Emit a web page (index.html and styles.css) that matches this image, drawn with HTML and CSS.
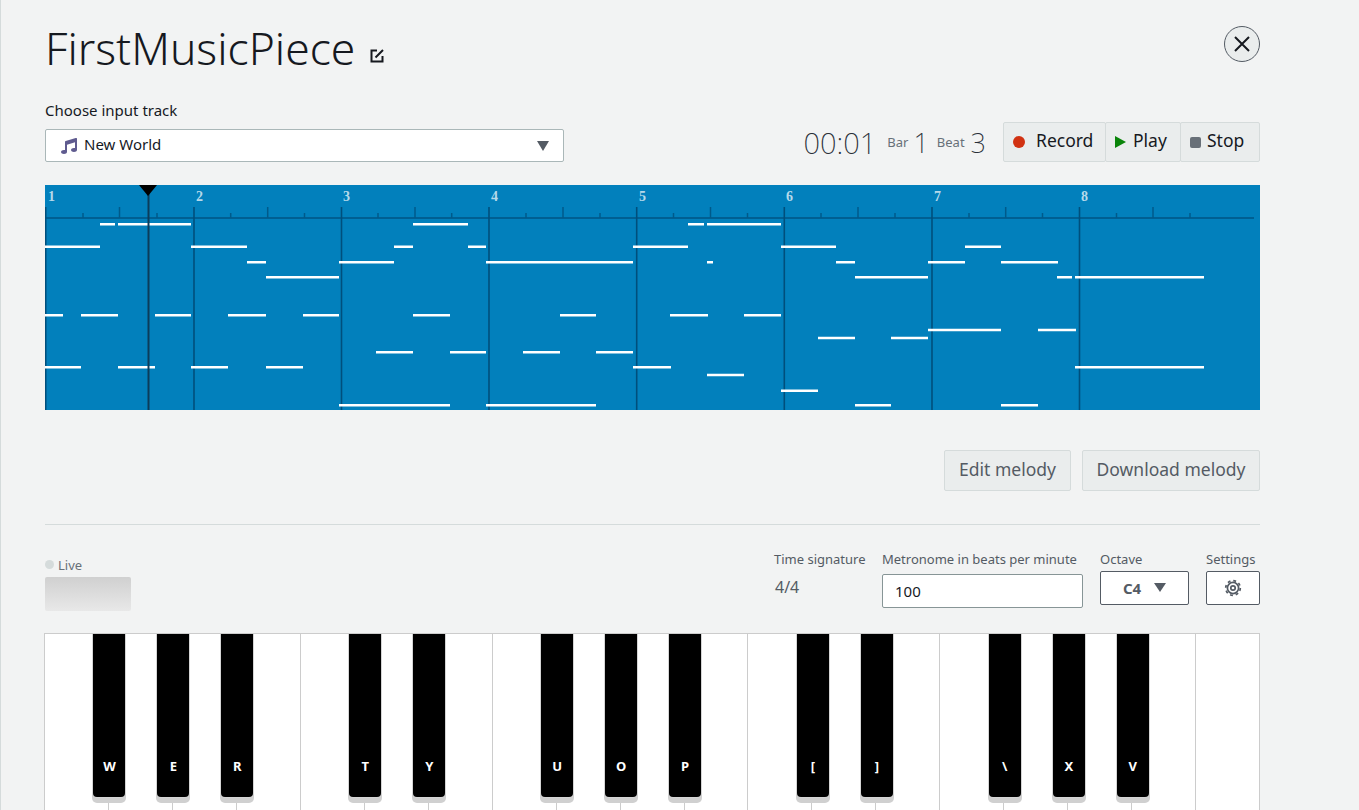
FILE: index.html
```html
<!DOCTYPE html>
<html>
<head>
  <meta charset="utf-8">
  <title>FirstMusicPiece</title>
  <link rel="stylesheet" href="styles.css">
</head>
<body>
  <div class="page">
    <div class="title-row">
      <div class="title">
        <h1>FirstMusicPiece</h1>
        <svg class="edit-icon" viewBox="0 0 16 16"><path d="M8 2.5H2.5v11h11V8M6.5 9.5L14 2"/></svg>
      </div>
      <button class="close-btn" type="button">
        <svg viewBox="0 0 16 16"><path d="M1 1l14 14M15 1L1 15"/></svg>
      </button>
    </div>

    <div class="track-row">
      <div class="track-picker">
        <label class="track-label">Choose input track</label>
        <div class="track-select">
          <svg class="note-icon" viewBox="0 0 512 512"><path d="M470.38 1.51L150.41 96A32 32 0 0 0 128 126.51v261.41A139 139 0 0 0 96 384c-53 0-96 28.66-96 64s43 64 96 64 96-28.66 96-64V214.32l256-75v184.61a138.4 138.4 0 0 0-32-3.93c-53 0-96 28.66-96 64s43 64 96 64 96-28.65 96-64V32a32 32 0 0 0-41.62-30.49z"/></svg>
          <span>New World</span>
          <i class="caret"></i>
        </div>
      </div>
      <div class="transport">
        <span class="time">00:01</span>
        <span class="count-label count-bar">Bar</span>
        <span class="count count-first">1</span>
        <span class="count-label count-beat">Beat</span>
        <span class="count">3</span>
        <div class="transport-btns">
          <button class="t-btn t-record" type="button"><i class="dot"></i>Record</button>
          <button class="t-btn t-play" type="button"><i class="play"></i>Play</button>
          <button class="t-btn t-stop" type="button"><i class="stop"></i>Stop</button>
        </div>
      </div>
    </div>

    <svg class="roll" viewBox="45 185 1215 225">
      <g class="bar-nums">
        <text x="48" y="201">1</text><text x="196" y="201">2</text><text x="343" y="201">3</text><text x="491" y="201">4</text>
        <text x="639" y="201">5</text><text x="786" y="201">6</text><text x="934" y="201">7</text><text x="1081" y="201">8</text>
      </g>
      <path class="ruler" d="M45 218H1254"/>
      <path class="tick-s" d="M83 213v5M157 213v5M230.7 213v5M304.5 213v5M378 213v5M451.7 213v5M526 213v5M600 213v5M673.5 213v5M747.5 213v5M821 213v5M895 213v5M969 213v5M1042.5 213v5M1116.5 213v5M1190 213v5"/>
      <path class="tick-m" d="M119.5 207v11M267.7 207v11M415 207v11M563 207v11M710.5 207v11M858 207v11M1005.7 207v11M1153 207v11"/>
      <path class="bar-line" d="M45.7 207V410M194 207V410M341.5 207V410M489 207V410M636.7 207V410M784.3 207V410M932 207V410M1079.5 207V410"/>
      <g class="notes">
        <path d="M100 224.3h15M118 224.3h73M413 224.3h55M688 224.3h16M707 224.3h74"/>
        <path d="M45 246.7h55M191 246.7h56M394 246.7h19M468 246.7h18M633 246.7h55M781 246.7h55M965 246.7h36"/>
        <path d="M247 262.3h19M339 262.3h55M486 262.3h147M707 262.3h6M836 262.3h19M928 262.3h37M1001 262.3h57"/>
        <path d="M266 277.3h73M855 277.3h73M1057 277.3h15M1075 277.3h129"/>
        <path d="M45 315.3h18M81 315.3h37M155 315.3h36M228 315.3h38M303 315.3h36M413 315.3h37M560 315.3h36M670 315.3h38M744 315.3h37"/>
        <path d="M928 330h73M1038 330h38"/>
        <path d="M818 338h37M891 338h37"/>
        <path d="M376 352.3h37M450 352.3h36M523 352.3h37M596 352.3h37"/>
        <path d="M45 367.3h36M118 367.3h37M191 367.3h37M266 367.3h37M633 367.3h38M1075 367.3h129"/>
        <path d="M707 375h37"/>
        <path d="M781 390.7h37"/>
        <path d="M339 405.3h111M486 405.3h110M855 405.3h36M1001 405.3h37"/>
      </g>
      <path class="playhead" d="M148.5 190V410"/>
      <path d="M139 185h18l-9 11z"/>
    </svg>

    <div class="melody-actions">
      <button class="m-btn m-edit" type="button">Edit melody</button>
      <button class="m-btn m-download" type="button">Download melody</button>
    </div>

    <div class="divider"></div>

    <div class="controls">
      <div class="live">
        <div class="live-label"><i></i>Live</div>
        <div class="live-box"></div>
      </div>
      <div class="fields">
        <div class="field f-time">
          <div class="field-label">Time signature</div>
          <div class="time-sig">4/4</div>
        </div>
        <div class="field f-metro">
          <div class="field-label">Metronome in beats per minute</div>
          <div class="metro-input">100</div>
        </div>
        <div class="field f-octave">
          <div class="field-label">Octave</div>
          <button class="octave-btn" type="button">C4<i class="caret"></i></button>
        </div>
        <div class="field f-settings">
          <div class="field-label">Settings</div>
          <button class="octave-btn" type="button">
            <svg class="gear" viewBox="0 0 18 18">
              <circle class="gear-teeth" cx="9" cy="9" r="7.3"/>
              <circle cx="9" cy="9" r="5.6"/>
              <circle cx="9" cy="9" r="2.2"/>
            </svg>
          </button>
        </div>
      </div>
    </div>

    <div class="piano">
      <div class="white"><span class="black">W</span></div>
      <div class="white"><span class="black">E</span></div>
      <div class="white"><span class="black">R</span></div>
      <div class="white"></div>
      <div class="white"><span class="black">T</span></div>
      <div class="white"><span class="black">Y</span></div>
      <div class="white"></div>
      <div class="white"><span class="black">U</span></div>
      <div class="white"><span class="black">O</span></div>
      <div class="white"><span class="black">P</span></div>
      <div class="white"></div>
      <div class="white"><span class="black">[</span></div>
      <div class="white"><span class="black">]</span></div>
      <div class="white"></div>
      <div class="white"><span class="black">\</span></div>
      <div class="white"><span class="black">X</span></div>
      <div class="white"><span class="black">V</span></div>
      <div class="white"></div>
      <div class="white"></div>
    </div>
  </div>
</body>
</html>
```

FILE: styles.css
```css
html, body {
  margin: 0;
  padding: 0;
}

body {
  background: #f2f3f3;
  color: #16191f;
  font-family: "Noto Sans", Arial, sans-serif;
}

button {
  font-family: inherit;
  cursor: pointer;
}

i {
  display: block;
}

.page {
  box-sizing: border-box;
  height: 100vh;
  overflow: hidden;
  border-left: 1px solid #d5dbdb;
  padding-left: 44px;
}

.page > * {
  width: 1215px;
}

/* header */
.title-row {
  display: flex;
  justify-content: space-between;
  align-items: flex-start;
  box-sizing: border-box;
  height: 101px;
  padding-top: 26px;
}

.title {
  display: flex;
  align-items: flex-end;
}

h1 {
  margin: 0;
  font-size: 44.4px;
  font-weight: 300;
  line-height: 44px;
}

.edit-icon {
  width: 16px;
  height: 16px;
  margin: 0 0 6px 14px;
  fill: none;
  stroke: #16191f;
  stroke-width: 2;
}

.close-btn {
  box-sizing: border-box;
  width: 36px;
  height: 36px;
  padding: 0;
  border: 1px solid #545b64;
  border-radius: 50%;
  background: #eaeded;
  display: flex;
  align-items: center;
  justify-content: center;
}

.close-btn svg {
  width: 16px;
  height: 16px;
  fill: none;
  stroke: #16191f;
  stroke-width: 2;
}

/* track row */
.track-row {
  display: flex;
  justify-content: space-between;
  align-items: flex-end;
  height: 61px;
}

.track-label {
  display: block;
  height: 28px;
  font-size: 15px;
  line-height: 18px;
}

.track-select {
  box-sizing: border-box;
  width: 519px;
  height: 33px;
  display: flex;
  align-items: center;
  padding: 0 14px 0 15px;
  background: #fff;
  border: 1px solid #aab7b8;
  border-radius: 2px;
  font-size: 15px;
}

.track-select span {
  margin-bottom: 3px;
}

.note-icon {
  width: 16px;
  height: 16px;
  margin-right: 7px;
  fill: #5f5b8f;
}

.caret {
  width: 0;
  height: 0;
  margin-left: auto;
  border-style: solid;
  border-width: 10px 6.5px 0;
  border-color: #545b64 transparent transparent;
}

.transport {
  display: flex;
  align-items: center;
  color: #2a2f38;
}

.time {
  font-size: 29px;
  font-weight: 200;
  margin-right: 11px;
}

.count-label {
  font-size: 13px;
  color: #687078;
}

.count-bar {
  margin-right: 5px;
}

.count-beat {
  margin-right: 6px;
}

.count {
  font-size: 27px;
  font-weight: 200;
  margin-right: 12px;
}

.count-first {
  margin-right: 8px;
}

.transport-btns {
  display: flex;
  height: 40px;
  margin-left: 6px;
}

.t-btn {
  box-sizing: border-box;
  display: flex;
  align-items: center;
  padding: 0 0 4px 9px;
  margin-left: -1px;
  background: #eaeded;
  border: 1px solid #d5dbdb;
  border-radius: 2px;
  color: #16191f;
  font-size: 17.5px;
}

.t-record {
  width: 103px;
}

.t-play {
  width: 76px;
}

.t-stop {
  width: 80px;
}

.dot {
  width: 12px;
  height: 12px;
  margin: 4px 11px 0 0;
  border-radius: 50%;
  background: #d13212;
}

.play {
  width: 0;
  height: 0;
  margin: 4px 7px 0 0;
  border-style: solid;
  border-width: 6px 0 6px 11px;
  border-color: transparent transparent transparent #0a850a;
}

.stop {
  width: 11px;
  height: 11px;
  margin: 4px 6px 0 0;
  border-radius: 2px;
  background: #687078;
}

/* melody roll */
.roll {
  display: block;
  height: 225px;
  margin-top: 23px;
  background: #0280bc;
}

.bar-nums text {
  fill: #b5d9ea;
  font-family: "Liberation Serif", serif;
  font-size: 14px;
  font-weight: 700;
}

.ruler {
  fill: none;
  stroke: #005f92;
  stroke-width: 2;
}

.tick-s,
.tick-m {
  fill: none;
  stroke: #005a8a;
  stroke-width: 1.5;
}

.bar-line {
  fill: none;
  stroke: #004f7c;
  stroke-width: 1.6;
}

.notes path {
  fill: none;
  stroke: #fff;
  stroke-width: 2.6;
}

.playhead {
  fill: none;
  stroke: #0c3c5a;
  stroke-width: 2;
}

.melody-actions {
  display: flex;
  justify-content: flex-end;
  gap: 11px;
  margin-top: 40px;
}

.m-btn {
  box-sizing: border-box;
  height: 41px;
  padding: 0 0 4px;
  background: #eaeded;
  border: 1px solid #d5dbdb;
  border-radius: 2px;
  color: #545b64;
  font-size: 17.5px;
}

.m-edit {
  width: 127px;
}

.m-download {
  width: 178px;
}

.divider {
  height: 1px;
  margin-top: 33px;
  background: #d5dbdb;
}

/* controls */
.controls {
  display: flex;
  justify-content: space-between;
  height: 59px;
  margin-top: 27px;
  color: #545b64;
}

.live-label {
  display: flex;
  align-items: center;
  height: 25px;
  font-size: 13px;
  color: #687078;
}

.live-label i {
  width: 9px;
  height: 9px;
  margin-right: 4px;
  border-radius: 50%;
  background: #d5dbdb;
}

.live-box {
  width: 86px;
  height: 34px;
  border-radius: 2px;
  background: linear-gradient(#d0d0d0, #e8e8e8);
}

.fields {
  display: flex;
}

.field-label {
  height: 19px;
  font-size: 13px;
  line-height: 15px;
  white-space: nowrap;
}

.f-time {
  width: 92px;
  margin-right: 16px;
}

.time-sig {
  margin-top: 5px;
  padding-left: 1px;
  font-size: 16px;
}

.f-metro {
  width: 201px;
  margin-right: 17px;
}

.metro-input {
  box-sizing: border-box;
  height: 34px;
  margin-top: 3px;
  padding: 6px 12px;
  background: #fff;
  border: 1px solid #879596;
  border-radius: 2px;
  color: #16191f;
  font-size: 15px;
  line-height: 20px;
}

.f-octave {
  width: 89px;
  margin-right: 17px;
}

.f-settings {
  width: 54px;
}

.octave-btn {
  box-sizing: border-box;
  width: 100%;
  height: 34px;
  display: flex;
  align-items: center;
  justify-content: center;
  padding: 0 0 1px;
  background: #fff;
  border: 1px solid #545b64;
  border-radius: 2px;
  color: #545b64;
  font-size: 15px;
  font-weight: 700;
}

.octave-btn .caret {
  margin-left: 13px;
  border-width: 9px 6px 0;
}

.gear {
  width: 18px;
  height: 18px;
  fill: none;
  stroke: #545b64;
  stroke-width: 1.7;
}

.gear-teeth {
  stroke-dasharray: 2.87 2.87;
}

/* keyboard */
.piano {
  display: flex;
  box-sizing: border-box;
  width: 1216px !important;
  height: 260px;
  margin: 22px 0 0 -1px;
  background: #fff;
  border: 1px solid #ccc;
}

.white {
  position: relative;
  box-sizing: border-box;
  flex: 1;
  border-right: 1px solid #ccc;
}

.white:last-child {
  border-right: 0;
}

.black {
  position: absolute;
  z-index: 1;
  top: 0;
  right: -17.5px;
  box-sizing: border-box;
  width: 32px;
  height: 163px;
  padding-top: 124px;
  background: #000;
  border-radius: 0 0 4px 4px;
  box-shadow: 0 0 0 1px #d5d5d5, 0 5px 0 1px #d0d0d0;
  clip-path: inset(0 -2px -6px -2px);
  color: #fff;
  font-size: 13px;
  font-weight: 700;
  line-height: 16px;
  text-align: center;
}
```
